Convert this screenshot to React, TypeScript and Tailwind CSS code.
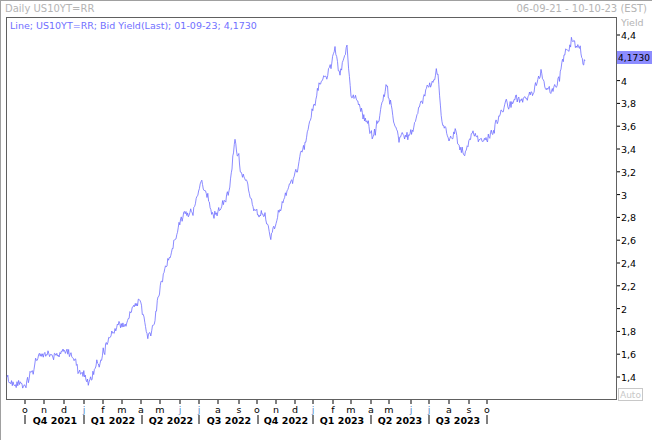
const KEY: [number, number][] = [
  [6,380],[12,386],[16,388],[25,378],[33,362],[40,355],[47,348],[55,356],[62,350],[70,353],[77,366],[82,372],[88,380],[95,365],[103,350],[110,335],[118,325],[125,322],[132,306],[138,300],[143,320],[149,340],[154,312],[160,278],[166,262],[172,244],[178,225],[185,205],[192,212],[200,182],[206,198],[213,215],[220,205],[228,190],[234,134],[240,168],[246,180],[252,205],[258,212],[264,218],[269,236],[275,222],[282,202],[290,182],[298,162],[304,142],[311,112],[318,84],[325,72],[330,62],[334,48],[339,68],[346,48],[350,92],[356,104],[362,118],[368,130],[372,142],[378,118],[385,88],[391,112],[398,136],[406,138],[412,128],[420,106],[427,90],[432,82],[437,68],[441,122],[448,140],[455,132],[462,152],[467,144],[472,128],[478,138],[485,142],[491,132],[497,120],[503,110],[510,100],[517,98],[524,98],[530,92],[536,86],[540,72],[546,88],[552,96],[557,78],[563,54],[568,44],[572,37],[576,47],[580,56],[582,64],[584,60],
];

function buildPath() {
  let seed = 11;
  const rnd = () => {
    seed = (seed * 16807) % 2147483647;
    return seed / 2147483647 - 0.5;
  };
  const pts: string[] = [];
  let walk = 0;
  for (let i = 0; i < KEY.length - 1; i++) {
    const [x0, y0] = KEY[i];
    const [x1, y1] = KEY[i + 1];
    const steps = Math.max(1, Math.round((x1 - x0) / 0.8));
    for (let s = 0; s < steps; s++) {
      const t = s / steps;
      walk = walk * 0.75 + rnd() * 7;
      const y = y0 + (y1 - y0) * t + walk + rnd() * 6;
      pts.push(`${(x0 + (x1 - x0) * t).toFixed(1)},${y.toFixed(1)}`);
    }
  }
  pts.push(`${KEY[KEY.length - 1][0]},${KEY[KEY.length - 1][1]}`);
  return "M" + pts.join("L");
}

const months: [string, number][] = [
  ["o",24],["n",43],["d",63],["j",83],["f",102],["m",121],["a",140],["m",159],["j",179],["j",198],["a",217],["s",238],["o",256],["n",275],["d",294],["j",312],["f",332],["m",350],["a",370],["m",388],["j",410],["j",428],["a",448],["s",468],["o",486],
];
const quarters = ["Q4 2021","Q1 2022","Q2 2022","Q3 2022","Q4 2022","Q1 2023","Q2 2023","Q3 2023"];

export default function App() {
  const yLabels = ["4,4","4,2","4","3,8","3,6","3,4","3,2","3","2,8","2,6","2,4","2,2","2","1,8","1,6","1,4"];
  const path = buildPath();
  return (
    <div className="w-[652px] h-[440px] bg-white relative overflow-hidden border-l border-t border-[#a0a0a0]" style={{ fontFamily: "Tahoma, 'DejaVu Sans', sans-serif" }}>
      <div className="flex justify-between px-[4px] h-[16px] text-[10px] leading-[16px] text-[#b4b4b4]">
        <span>Daily US10YT=RR</span>
        <span className="mr-[1px]">06-09-21 - 10-10-23 (EST)</span>
      </div>
      <svg width="652" height="424" viewBox="0 16 652 424" className="block" style={{ fontFamily: "'DejaVu Sans', sans-serif" }}>
        <rect x="5.5" y="16.5" width="610" height="382" fill="white" stroke="#606060" />
        <text x="9" y="28" fontSize="9.5" fill="#7070ff">Line; US10YT=RR; Bid Yield(Last); 01-09-23; 4,1730</text>
        <path d={path} fill="none" stroke="#6d6dff" strokeWidth="0.8" />
        <text x="620" y="25" fontSize="9.5" fill="#b4b4b4">Yield</text>
        {yLabels.map((l, i) => {
          const y = 34 + i * 22.8;
          return (
            <g key={i}>
              <line x1="616" x2="619" y1={y} y2={y} stroke="#000" />
              {i !== 1 && <text x="620" y={y + 4} fontSize="9.5" fill="#000">{l}</text>}
            </g>
          );
        })}
        <rect x="616" y="50" width="36" height="13" fill="#8c8cff" />
        <text x="617" y="60" fontSize="9" fill="#000" textLength="32">4,1730</text>
        <rect x="617.5" y="387.5" width="24" height="12" fill="white" stroke="#c8c8c8" />
        <text x="619" y="397" fontSize="9" fill="#c8c8c8">Auto</text>
        {months.map(([m, x], i) => (
          <g key={i}>
            <line x1={x} x2={x} y1="399" y2="403" stroke="#000" />
            <text x={x} y="412" fontSize="9.5" textAnchor="middle" fill={m === "j" ? "#5a8ccc" : "#000"}>{m}</text>
          </g>
        ))}
        {[24, 83, 141, 198, 257, 312, 370, 428, 486].map((x, i) => (
          <line key={i} x1={x} x2={x} y1="414" y2="423" stroke="#000" />
        ))}
        {[54, 112, 170, 228, 285, 341, 399, 457].map((x, i) => (
          <text key={i} x={x} y="423" fontSize="9.5" fontWeight="bold" textAnchor="middle" fill="#000">{quarters[i]}</text>
        ))}
      </svg>
    </div>
  );
}
